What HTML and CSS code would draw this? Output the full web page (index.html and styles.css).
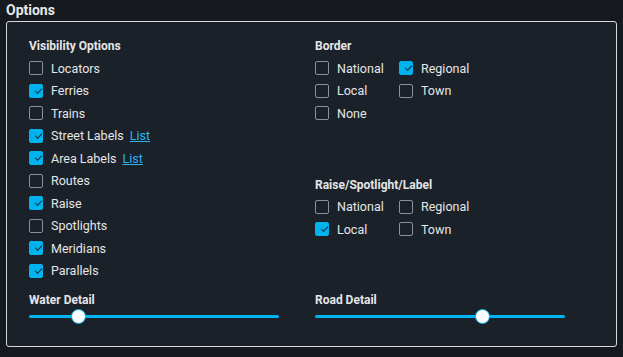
FILE: index.html
```html
<!DOCTYPE html>
<html>
<head>
<meta charset="utf-8">
<link rel="stylesheet" href="styles.css">
</head>
<body>
<div class="title">Options</div>
<div class="panel">
  <div class="cols">
    <div class="col">
      <div class="heading">Visibility Options</div>
      <div class="row"><span class="cb"></span><span class="lbl">Locators</span></div>
      <div class="row"><span class="cb on"></span><span class="lbl">Ferries</span></div>
      <div class="row"><span class="cb"></span><span class="lbl">Trains</span></div>
      <div class="row"><span class="cb on"></span><span class="lbl">Street Labels</span><a class="link">List</a></div>
      <div class="row"><span class="cb on"></span><span class="lbl">Area Labels</span><a class="link">List</a></div>
      <div class="row"><span class="cb"></span><span class="lbl">Routes</span></div>
      <div class="row"><span class="cb on"></span><span class="lbl">Raise</span></div>
      <div class="row"><span class="cb"></span><span class="lbl">Spotlights</span></div>
      <div class="row"><span class="cb on"></span><span class="lbl">Meridians</span></div>
      <div class="row"><span class="cb on"></span><span class="lbl">Parallels</span></div>
    </div>
    <div class="col">
      <div class="heading">Border</div>
      <div class="grid2">
        <div class="row"><span class="cb"></span><span class="lbl">National</span></div>
        <div class="row"><span class="cb on"></span><span class="lbl">Regional</span></div>
        <div class="row"><span class="cb"></span><span class="lbl">Local</span></div>
        <div class="row"><span class="cb"></span><span class="lbl">Town</span></div>
        <div class="row"><span class="cb"></span><span class="lbl">None</span></div>
      </div>
      <div class="heading second">Raise/Spotlight/Label</div>
      <div class="grid2">
        <div class="row"><span class="cb"></span><span class="lbl">National</span></div>
        <div class="row"><span class="cb"></span><span class="lbl">Regional</span></div>
        <div class="row"><span class="cb on"></span><span class="lbl">Local</span></div>
        <div class="row"><span class="cb"></span><span class="lbl">Town</span></div>
      </div>
    </div>
  </div>
  <div class="cols sliders">
    <div class="col">
      <div class="slabel">Water Detail</div>
      <div class="slider"><div class="track"></div><div class="thumb" style="left: 16.6%"></div></div>
    </div>
    <div class="col">
      <div class="slabel">Road Detail</div>
      <div class="slider"><div class="track"></div><div class="thumb" style="left: 63.8%"></div></div>
    </div>
  </div>
</div>
</body>
</html>
```

FILE: styles.css
```css
html, body {
  margin: 0;
  padding: 0;
}
body {
  background: #16191d;
  font-family: Roboto, "Liberation Sans", sans-serif;
  color: #e4e6e8;
  width: 623px;
  height: 357px;
  overflow: hidden;
}
.title {
  font-weight: bold;
  font-size: 14px;
  line-height: 20px;
  height: 21px;
  padding-left: 6px;
  color: #e6e8ea;
}
.panel {
  margin: 0 6px;
  border: 1px solid #d6d8da;
  border-radius: 3px;
  background: #1b2129;
  padding: 14px 0 0 22px;
  box-sizing: border-box;
  height: 326px;
}
.cols {
  display: grid;
  grid-template-columns: 286px 286px;
}
.heading {
  font-weight: bold;
  font-size: 12px;
  line-height: 20px;
  height: 20px;
  margin-bottom: 1px;
  color: #e4e6e8;
}
.heading.second {
  margin-top: 50px;
}
.row {
  display: flex;
  align-items: center;
  height: 22.5px;
  font-size: 12.5px;
}
.grid2 {
  display: grid;
  grid-template-columns: 84px 100px;
}
.cb {
  width: 14px;
  height: 14px;
  box-sizing: border-box;
  border: 1.5px solid #8d9298;
  border-radius: 2px;
  flex: none;
  position: relative;
}
.cb.on {
  background: #00b2ee;
  border-color: #00b2ee;
}
.cb.on::after {
  content: "";
  position: absolute;
  left: 3.5px;
  top: 2px;
  width: 6px;
  height: 3px;
  border-left: 1.3px solid #1b2a36;
  border-bottom: 1.3px solid #1b2a36;
  transform: rotate(-45deg) translate(0px, 1.5px);
}
.lbl {
  margin-left: 8px;
}
.link {
  margin-left: 6px;
  color: #2ab4f2;
  text-decoration: underline;
}
.sliders {
  margin-top: 10px;
}
.slabel {
  font-weight: bold;
  font-size: 12px;
  line-height: 16px;
  height: 16px;
}
.slider {
  position: relative;
  width: 250px;
  height: 16px;
}
.track {
  position: absolute;
  left: 0;
  right: 0;
  top: 7px;
  height: 3px;
  background: #00b4ef;
  border-radius: 2px;
}
.thumb {
  position: absolute;
  top: 1px;
  width: 15px;
  height: 15px;
  box-sizing: border-box;
  border-radius: 50%;
  background: #ffffff;
  border: 1.5px solid #00a8e0;
}
```
